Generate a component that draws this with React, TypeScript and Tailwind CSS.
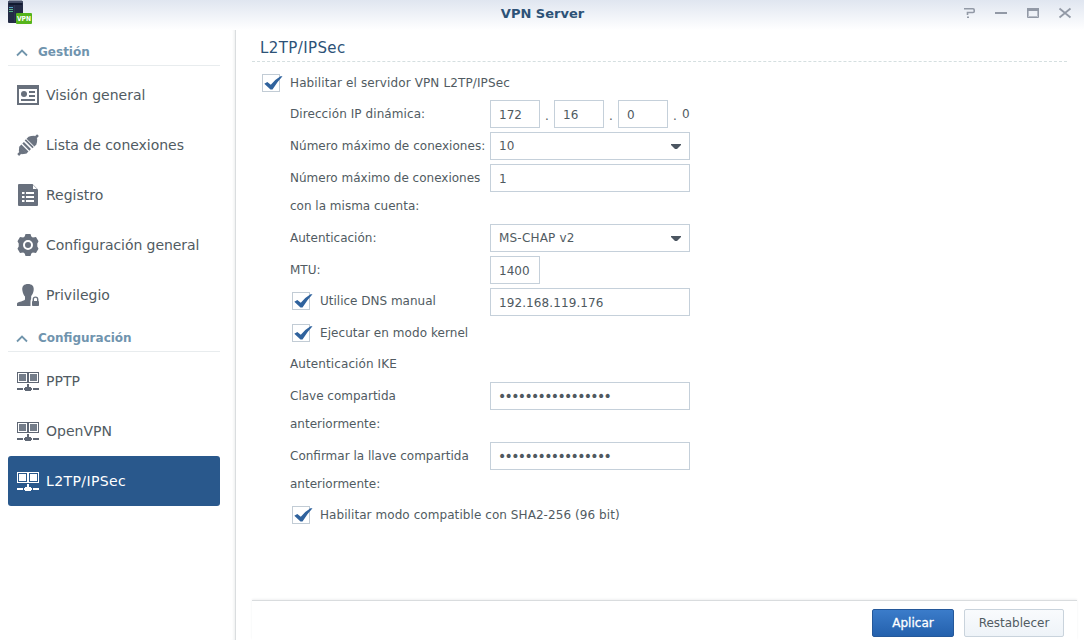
import React from "react";

const fontStack = "font-['DejaVu_Sans',sans-serif]";

function VpnLogo() {
  return (
    <svg width="26" height="24" viewBox="0 0 26 24" className="block">
      <rect x="0" y="1" width="15" height="22" rx="1" fill="#232b45" />
      <path d="M1 0.500h13l1 2.500H0z" fill="#465069" />
      <rect x="1" y="3" width="13" height="2" fill="#111a30" />
      <path d="M1 7.500h4" stroke="#56a7c8" />
      <path d="M1 9.500h4M1 11.500h4" stroke="#58b48a" />
      <path d="M6.500 5v17" stroke="#2b3552" />
      <rect x="8" y="13" width="16" height="11" rx="1" fill="#55b41c" />
      <text x="16" y="21.2" textAnchor="middle" fontSize="7" fontWeight="700" fill="#fff" fontFamily="DejaVu Sans, sans-serif" textLength="14" lengthAdjust="spacingAndGlyphs">VPN</text>
    </svg>
  );
}

function OverviewIcon() {
  return (
    <svg width="22" height="20" viewBox="0 0 22 20" shapeRendering="crispEdges">
      <path d="M0 0H22V20H0zM2 4V18H20V4z" fill="#68707c" fillRule="evenodd" />
      <circle cx="7" cy="9" r="3" fill="#68707c" shapeRendering="auto" />
      <path d="M12 7h6M12 11h6M4 15h14" stroke="#68707c" strokeWidth="2" />
    </svg>
  );
}

function PlugIcon() {
  return (
    <svg width="22" height="22" viewBox="0 0 22 22">
      <g transform="translate(11 11) rotate(-45)" fill="#6b7380">
        <rect x="-14" y="-1.200" width="5" height="2.600" />
        <path d="M-11-2l3-2.500h1V4.500h-1L-11 2z" />
        <path d="M-7.500-5h3.200V5h-3.200zM-3-5h2.200V5h-2.200z" />
        <path d="M.8-5.500h1.800v11H.8z" />
        <path d="M3.500-5.500h2.800Q8.500-4.500 11-2V2Q8.500 4.500 6.300 5.500H3.500z" />
        <rect x="9" y="-1.200" width="5" height="2.600" />
      </g>
    </svg>
  );
}

function LogIcon() {
  return (
    <svg width="20" height="22" viewBox="0 0 20 22">
      <path d="M1 0h13.500L20 5.500V21q0 1-1 1H1q-1 0-1-1V1q0-1 1-1z" fill="#68707d" />
      <path d="M15 1v4h4z" fill="#fff" />
      <path d="M4 9h2.500M8 9h8M4 13h2.500M8 13h8M4 17h2.500M8 17h8" stroke="#fff" strokeWidth="2" />
    </svg>
  );
}

function GearIcon() {
  return (
    <svg width="22" height="22" viewBox="0 0 22 22">
      <path d="M8.500 0h5l.8 2.600 1.500.9L19 3l2.500 4.200L20.300 9.500v3l1.200 2.300L19 19l-3.200-.5-1.500.9-.8 2.600h-5l-.8-2.600-1.500-.9L3 19 .5 14.800l1.200-2.300v-3L.5 7.200 3 3l3.200.5 1.500-.9z" fill="#68707d" strokeLinejoin="round" />
      <circle cx="11" cy="11" r="4" fill="#68707d" stroke="#fff" strokeWidth="2" />
    </svg>
  );
}

function UserLockIcon() {
  return (
    <svg width="22" height="22" viewBox="0 0 22 22">
      <path d="M11 0c3.800 0 6.200 2 5.700 6-.3 3-1.500 5-2.500 6v2.500l1 1.200V22H0v-2.500q0-1 2-1.500c3-.8 5.500-1.500 6-2.500v-3C6.800 11.500 5.800 9 5.300 6 4.800 2 7.200 0 11 0z" fill="#68707d" />
      <path d="M15 13.500q-1.500 2-1.500 4.500v4H22v-5z" fill="#fff" />
      <rect x="15" y="17" width="7" height="5" rx=".8" fill="#68707d" />
      <path d="M16.300 17.500v-2.200a2.200 2.200 0 0 1 4.400 0v2.200" fill="none" stroke="#68707d" strokeWidth="1.400" />
    </svg>
  );
}

function NetworkIcon({ active }: { active?: boolean }) {
  const c = active ? "#fff" : "#5f6774";
  return (
    <svg width="22" height="19" viewBox="0 0 22 19" shapeRendering="crispEdges">
      <path d="M.5.500h10v10H.5zM11.500.500h10v10h-10z" fill="none" stroke={c} />
      <path d="M2 2h7v7H2zM13 2h7v7h-7z" fill={active ? "#fff" : "#747d8a"} />
      <path d="M10 12h2v3h2v1h1v2h-1v1H8v-1H7v-2h1v-1h2zM0 16h6v2H0zM16 16h6v2h-6z" fill={c} />
    </svg>
  );
}

function GroupTitle({ label }: { label: string }) {
  return (
    <div className="ml-2 flex h-7 w-[212px] items-center border-b border-[#e8ecee]">
      <svg width="12" height="8" viewBox="0 0 12 8" className="ml-2 mt-[3px]">
        <path d="M1 6.500l5-5 5 5" fill="none" stroke="#7195ac" strokeWidth="1.800" />
      </svg>
      <span className="ml-2.5 text-[12px] font-bold text-[#7094ae]">{label}</span>
    </div>
  );
}

function NavItem({ icon, label, active, spacing = "" }: { icon: React.ReactNode; label: string; active?: boolean; spacing?: string }) {
  return (
    <div className={"ml-2 flex h-[50px] w-[212px] items-center rounded-[3px] pl-[9px] text-[14px] " + (active ? "bg-[#29588c] text-white" : "text-[#515b62]")}>
      <span className="flex w-[22px] justify-center">{icon}</span>
      <span className={"ml-[7px] whitespace-nowrap " + spacing}>{label}</span>
    </div>
  );
}

function Check() {
  return (
    <span className="block h-[18px] w-[18px] shrink-0 border border-[#c2ccd5] bg-white">
      <svg width="20" height="17" viewBox="0 0 20 17" className="block overflow-visible">
        <path d="M1.300 8.800L4.300 6.900 7.800 9.800Q12.500 4 17.500 1.200H19.500Q14 7 9.500 14.500H7.500z" fill="#2f629d" />
      </svg>
    </span>
  );
}

function Row({ label, children, tall, spacing = "" }: { label: React.ReactNode; children?: React.ReactNode; tall?: boolean; spacing?: string }) {
  return (
    <div className={"flex items-start " + (tall ? "h-14" : "h-7")}>
      <div className={"w-[200px] shrink-0 whitespace-nowrap leading-7 " + spacing}>{label}</div>
      {children}
    </div>
  );
}

function CheckRow({ label, children, spacing = "" }: { label: string; children?: React.ReactNode; spacing?: string }) {
  return (
    <div className="flex h-7 items-start">
      <div className="flex w-[200px] shrink-0 items-start pl-0.5 pt-1">
        <Check />
        <span className={"-mt-1 ml-2.5 whitespace-nowrap leading-[26px] " + spacing}>{label}</span>
      </div>
      {children}
    </div>
  );
}

const field = "h-7 border border-[#c5d0da] bg-white pl-2 text-[#4f595f] outline-none ";
const textField = field + "pt-px text-[12px] ";
const secretField = field + "w-[200px] pl-[7px] text-[14px] tracking-[-1.66px] ";

function Select({ value, spacing = "" }: { value: string; spacing?: string }) {
  return (
    <div className="flex h-7 w-[200px] items-center justify-between border border-[#c5d0da] pl-2 pr-2">
      <span className={spacing}>{value}</span>
      <svg width="10" height="5" viewBox="0 0 10 5" className="mt-px"><path d="M0 0h10v1L6 5H4L0 1z" fill="#4c5661" /></svg>
    </div>
  );
}

export default function App() {
  return (
    <div className={"flex h-[640px] w-[1084px] flex-col overflow-hidden bg-white text-[12px] text-[#515b62] " + fontStack}>
      <header className="flex h-[30px] shrink-0 items-start bg-linear-to-b from-[#e0e6f0] to-white pl-2">
        <VpnLogo />
        <div className="flex-1 text-center text-[13px] font-bold leading-[27px] text-[#2d5277]">
          <span className="ml-[90px]">VPN Server</span>
        </div>
        <svg width="112" height="14" viewBox="0 0 112 14" className="mr-[11px] mt-1.5 overflow-visible" fill="none" stroke="#9299a6">
          <path d="M3 2.800h9q1.200 0 1.200 1.200v1.500q0 1-1.200 1H6.500V9M6 11.200h2" strokeWidth="1.600" />
          <path d="M34 7h12" strokeWidth="2" />
          <path d="M66.500 2v9.500h11V2" /><path d="M66 3.500h12" strokeWidth="3" />
          <path d="M67.500 5v5.500h9V5" strokeWidth="1" opacity=".6" />
          <path d="M98.500 2.500l11 9M109.500 2.500l-11 9" strokeWidth="1.800" />
        </svg>
      </header>
      <div className="flex min-h-0 flex-1">
        <aside className="w-[236px] shrink-0 border-r border-[#dadddf] pt-2 shadow-[inset_-3px_0_3px_-2px_#eceeef]">
          <GroupTitle label="Gestión" />
          <div className="pt-1">
            <NavItem icon={<OverviewIcon />} label="Visión general" />
            <NavItem icon={<PlugIcon />} label="Lista de conexiones" spacing="tracking-[-0.03px]" />
            <NavItem icon={<LogIcon />} label="Registro" />
            <NavItem icon={<GearIcon />} label="Configuración general" spacing="tracking-[-0.07px]" />
            <NavItem icon={<UserLockIcon />} label="Privilegio" />
          </div>
          <div className="pt-1"><GroupTitle label="Configuración" /></div>
          <div className="pt-1">
            <NavItem icon={<NetworkIcon />} label="PPTP" />
            <NavItem icon={<NetworkIcon />} label="OpenVPN" />
            <NavItem icon={<NetworkIcon active />} label="L2TP/IPSec" active spacing="tracking-[0.4px]" />
          </div>
        </aside>
        <main className="flex min-w-0 flex-1 flex-col">
          <h1 className="ml-4 mr-[17px] h-8 border-b border-dashed border-[#d5dfe0] pl-2 text-[15px] leading-9 tracking-[0.4px] text-[#2d5277]">L2TP/IPSec</h1>
          <div className="flex-1 pl-[26px] pt-3">
            <div className="flex h-[26px] items-start">
              <Check />
              <span className="ml-2.5 leading-[18px] tracking-[0.12px]">Habilitar el servidor VPN L2TP/IPSec</span>
            </div>
            <div className="ml-7 flex flex-col gap-1">
              <Row label="Dirección IP dinámica:" spacing="tracking-[0.08px]">
                <input readOnly value="172" className={textField + "w-[50px]"} />
                <span className="w-3.5 text-center leading-8">.</span>
                <input readOnly value="16" className={textField + "w-[50px]"} />
                <span className="w-3.5 text-center leading-8">.</span>
                <input readOnly value="0" className={textField + "w-[50px]"} />
                <span className="w-3.5 text-center leading-8">.</span>
                <span className="leading-7">0</span>
              </Row>
              <Row label="Número máximo de conexiones:" spacing="tracking-[0.03px]"><Select value="10" /></Row>
              <Row tall label={<>Número máximo de conexiones<br />con la misma cuenta:</>}>
                <input readOnly value="1" className={textField + "w-[200px]"} />
              </Row>
              <Row label="Autenticación:"><Select value="MS-CHAP v2" spacing="tracking-[0.2px]" /></Row>
              <Row label="MTU:"><input readOnly value="1400" className={textField + "w-[50px]"} /></Row>
              <CheckRow label="Utilice DNS manual"><input readOnly value="192.168.119.176" className={textField + "w-[200px] tracking-[0.1px]"} /></CheckRow>
              <CheckRow label="Ejecutar en modo kernel" spacing="tracking-[0.06px]" />
              <div className="-mt-0.5"><Row label="Autenticación IKE" spacing="tracking-[0.1px]" /></div>
              <Row tall label={<>Clave compartida<br />anteriormente:</>}>
                <input readOnly type="password" value="12345678901234567" className={secretField} />
              </Row>
              <Row tall label={<>Confirmar la llave compartida<br />anteriormente:</>}>
                <input readOnly type="password" value="12345678901234567" className={secretField} />
              </Row>
              <CheckRow label="Habilitar modo compatible con SHA2-256 (96 bit)" spacing="tracking-[0.07px]" />
            </div>
          </div>
          <footer className="ml-4 mr-[7px] flex h-10 shrink-0 justify-end gap-2.5 border-t border-[#d9dcde] pr-[13px] pt-2 shadow-[0_-1px_2px_#f0f1f2]">
            <button className="h-7 w-[82px] rounded-[2px] border border-[#24589a] bg-linear-to-b from-[#3b7cca] to-[#2461ad] text-[12px] text-white [-webkit-text-stroke:0.3px_white]">Aplicar</button>
            <button className="h-7 w-[100px] rounded-[2px] border border-[#c9d3dc] bg-linear-to-b from-[#f9fbfd] to-[#eef3f8] text-[12px] text-[#515b62]">Restablecer</button>
          </footer>
        </main>
      </div>
    </div>
  );
}
